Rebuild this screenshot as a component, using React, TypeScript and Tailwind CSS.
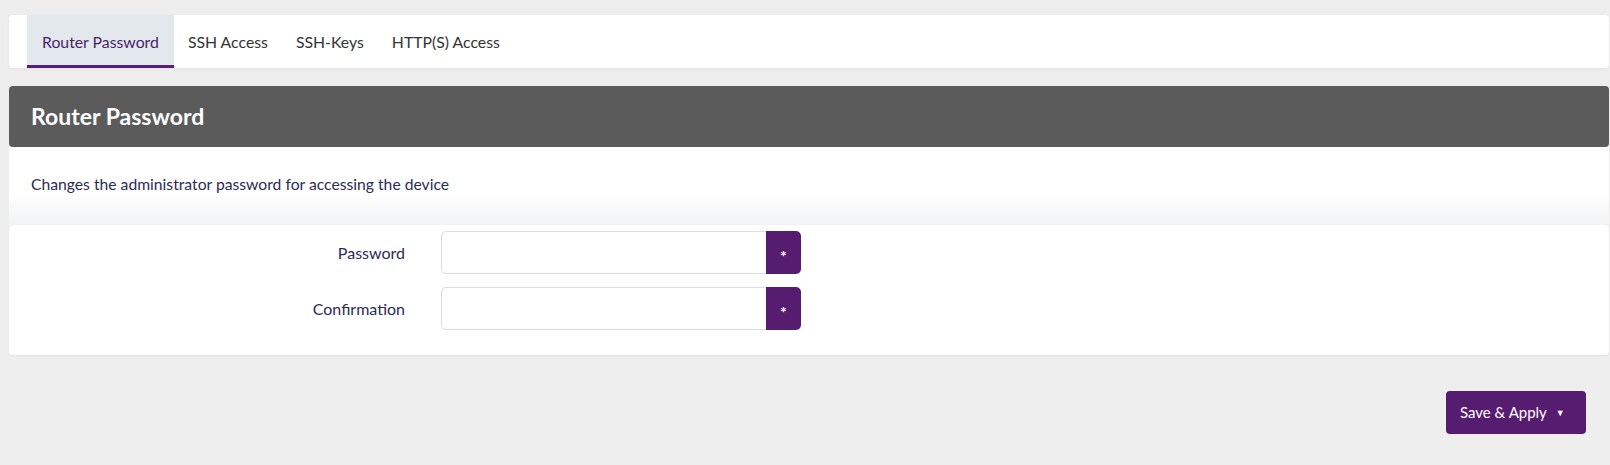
import React from "react";

const tabs = ["Router Password", "SSH Access", "SSH-Keys", "HTTP(S) Access"];

function PwRow({ label }: { label: string }) {
  return (
    <div className="flex items-center">
      <div className="w-[396px] text-right text-[16px] text-[#2b2b55]">{label}</div>
      <div className="ml-[36px] flex h-[43px] w-[360px]">
        <div className="flex-1 rounded-l-[5px] border border-r-0 border-[#dcdce2] bg-white" />
        <div className="flex w-[35px] items-center justify-center rounded-r-[5px] bg-[#561c70] pt-[6px] text-[16px] leading-none font-bold text-white">
          *
        </div>
      </div>
    </div>
  );
}

export default function App() {
  return (
    <div
      className="min-h-[465px] bg-[#eeeeee] pl-[9px] pr-[1px] pt-[15px]"
      style={{ fontFamily: "Lato, 'Open Sans', sans-serif" }}
    >
      <div className="flex h-[53px] rounded-[4px] bg-white pl-[18px] shadow-[0_1px_3px_rgba(0,0,0,0.06)]">
        {tabs.map((t, i) => (
          <div
            key={t}
            className={
              i === 0
                ? "flex items-center border-b-[3px] border-[#5a1e79] bg-[#e3e8ec] px-[15px] pt-[3px] text-[15.8px] text-[#4b1d6b]"
                : "flex items-center border-b-[3px] border-transparent px-[14px] pt-[3px] text-[15.8px] text-[#333333]"
            }
          >
            {t}
          </div>
        ))}
      </div>

      <div className="mt-[18px] flex h-[61px] items-center rounded-[4px] bg-[#5b5b5b] pl-[22px] text-[23px] font-bold text-white">
        Router Password
      </div>

      <div className="flex h-[78px] items-center bg-gradient-to-b from-white from-60% to-[#f1f2f3] pl-[22px] pb-[2px] text-[15.7px] text-[#2b2b55]">
        Changes the administrator password for accessing the device
      </div>

      <div className="flex flex-col gap-[13px] rounded-[4px] bg-white pb-[25px] pt-[6px] shadow-[0_1px_2px_rgba(0,0,0,0.05)]">
        <PwRow label="Password" />
        <PwRow label="Confirmation" />
      </div>

      <div className="mr-[23px] mt-[36px] flex justify-end">
        <button className="flex h-[43px] w-[140px] items-center rounded-[4px] bg-[#561c70] pl-[14px] text-[15px] text-white">
          Save &amp; Apply
          <span className="ml-[9px] text-[9px]">▼</span>
        </button>
      </div>
    </div>
  );
}
